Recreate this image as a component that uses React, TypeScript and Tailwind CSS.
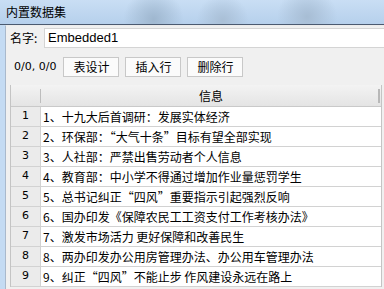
import React from 'react';

const rows: string[] = [
  '1、十九大后首调研：发展实体经济',
  '2、环保部：“大气十条”目标有望全部实现',
  '3、人社部：严禁出售劳动者个人信息',
  '4、教育部：中小学不得通过增加作业量惩罚学生',
  '5、总书记纠正“四风”重要指示引起强烈反响',
  '6、国办印发《保障农民工工资支付工作考核办法》',
  '7、激发市场活力 更好保障和改善民生',
  '8、两办印发办公用房管理办法、办公用车管理办法',
  '9、纠正“四风”不能止步 作风建设永远在路上',
];

const cjk = "font-['Noto_Sans_CJK_SC',sans-serif]";

const ToolButton: React.FC<{ label: string }> = ({ label }) => (
  <button
    className={`h-[20px] w-[56px] border border-[#c8c8c8] bg-[#fbfbfb] text-[12px] leading-none text-black ${cjk}`}
  >
    {label}
  </button>
);

const App: React.FC = () => {
  return (
    <div className="w-[384px] h-[289px] overflow-hidden bg-[#c4dbf3] flex flex-col">
      {/* Title bar */}
      <div className="h-[24px] shrink-0 flex items-center pl-[6px] bg-[radial-gradient(circle_at_40%_80%,#9fb7cf_0,transparent_30px),radial-gradient(circle_at_58%_85%,#a9bfd6_0,transparent_26px),radial-gradient(circle_at_80%_70%,#a7bdd4_0,transparent_30px),linear-gradient(#c9def4,#b6d0ec)]">
        <span className={`text-[12px] text-black ${cjk}`}>内置数据集</span>
      </div>
      <div className="h-[1px] shrink-0 bg-[#4b5a70]" />

      <div className="flex flex-1 min-h-0">
        {/* Window frame */}
        <div className="w-[5px] shrink-0 bg-[#c4dbf3]" />

        {/* Panel */}
        <div className="flex-1 min-w-0 bg-[#f0f0f0] border-l border-[#a9b9cc] border-t border-t-[#ececec] flex flex-col pl-[4px]">
          {/* Name row */}
          <div className="mt-[2px] h-[20px] flex items-center">
            <span className={`w-[34px] text-[12px] text-black ${cjk}`}>名字:</span>
            <div className="flex-1 h-[20px] bg-white border border-[#d4d4d4] border-r-0 flex items-center pl-[3px]">
              <span className="font-['Liberation_Sans',sans-serif] text-[13px] text-black">Embedded1</span>
            </div>
          </div>

          {/* Toolbar */}
          <div className="mt-[9px] h-[20px] flex items-center gap-[6px]">
            <span className="pl-[4px] pr-[1px] font-['DejaVu_Sans',sans-serif] text-[11px] text-black">0/0, 0/0</span>
            <ToolButton label="表设计" />
            <ToolButton label="插入行" />
            <ToolButton label="删除行" />
          </div>

          {/* Table */}
          <div className="mt-[8px] w-[372px] border-l border-r border-[#c4c4c4] bg-white">
            <div className="h-[22px] flex bg-[linear-gradient(#f3f3f3,#e4e4e4)] border-b border-[#c9c9c9]">
              <div className="w-[30px] flex items-center justify-end">
                <div className="w-[1px] h-[14px] bg-[#bdbdbd]" />
              </div>
              <div className="flex-1 flex items-center justify-center relative">
                <span className={`text-[12px] text-black ${cjk}`}>信息</span>
                <div className="absolute right-[1px] top-[4px] w-[2px] h-[14px] bg-[#b8b8b8]" />
              </div>
            </div>
            {rows.map((text, i) => (
              <div key={i} className="h-[20px] flex border-b border-[#d2d2d2]">
                <div className="w-[30px] bg-[#ebebeb] border-r border-[#d2d2d2] flex items-center justify-center">
                  <span className="font-['DejaVu_Sans',sans-serif] text-[11px] text-black">{i + 1}</span>
                </div>
                <div className="flex-1 flex items-center pl-[2px] whitespace-nowrap overflow-hidden">
                  <span className={`text-[12px] text-black ${cjk}`}>{text}</span>
                </div>
              </div>
            ))}
          </div>
        </div>
      </div>
    </div>
  );
};

export default App;
